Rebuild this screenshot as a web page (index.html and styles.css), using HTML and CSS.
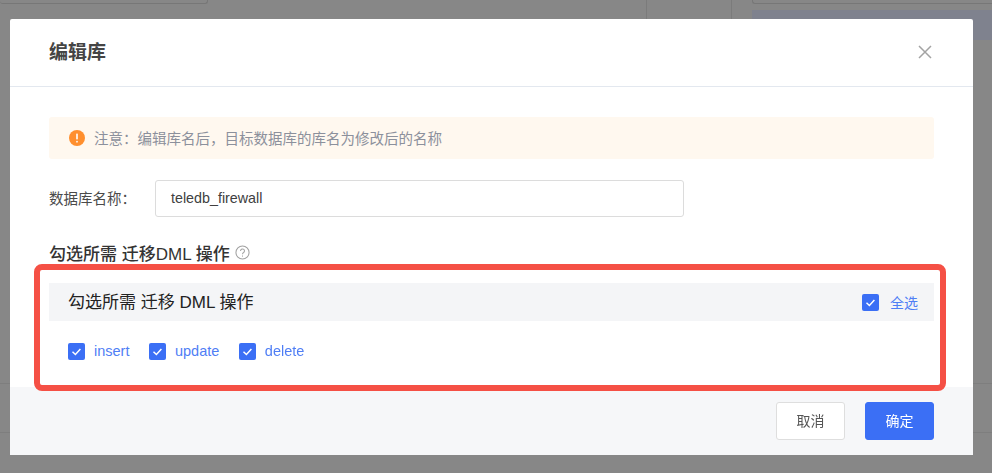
FILE: index.html
```html
<!DOCTYPE html>
<html lang="zh-CN">
<head>
<meta charset="utf-8">
<title>编辑库</title>
<link rel="stylesheet" href="styles.css">
</head>
<body>
<div class="page">
  <div class="page-top">
    <div class="page-tab"></div>
    <div class="page-col page-col-a"></div>
    <div class="page-col page-col-b"></div>
    <div class="page-side">
      <div class="page-side-box"></div>
      <div class="page-side-head"></div>
    </div>
  </div>
  <div class="page-row page-row-a"></div>
  <div class="page-row page-row-b"></div>
</div>

<div class="modal">
  <header class="modal-head">
    <h2 class="modal-title">编辑库</h2>
    <svg class="close" viewBox="0 0 14 14" width="14" height="14"><path d="M1 1l12 12M13 1L1 13"/></svg>
  </header>
  <div class="modal-body">
    <div class="alert">
      <svg class="alert-icon" viewBox="0 0 16 16" width="16" height="16"><circle cx="8" cy="8" r="8"/><rect x="7.2" y="3.4" width="1.6" height="6" rx=".6"/><rect x="7.2" y="10.8" width="1.6" height="1.7" rx=".6"/></svg>
      <span class="alert-text">注意：编辑库名后，目标数据库的库名为修改后的名称</span>
    </div>
    <div class="field">
      <label class="field-label">数据库名称：</label>
      <div class="input">teledb_firewall</div>
    </div>
    <div class="section-title">
      <span>勾选所需 迁移DML 操作</span>
      <svg class="help" viewBox="0 0 16 16" width="15" height="15"><circle cx="8" cy="8" r="7"/><path d="M5.9 6.3a2.1 2.1 0 1 1 3.3 1.7c-.8.5-1.2.9-1.2 1.8"/><path d="M8 11.2v1.2"/></svg>
    </div>
    <div class="panel-head">
      <span class="panel-title">勾选所需 迁移 DML 操作</span>
      <span class="check check-all">
        <svg class="box" viewBox="0 0 17 17" width="17" height="17"><rect width="17" height="17" rx="2"/><path d="M4.5 8.8l2.9 2.7 5-5.4"/></svg>
        <span>全选</span>
      </span>
    </div>
    <div class="options">
      <span class="check">
        <svg class="box" viewBox="0 0 17 17" width="17" height="17"><rect width="17" height="17" rx="2"/><path d="M4.5 8.8l2.9 2.7 5-5.4"/></svg>
        <span>insert</span>
      </span>
      <span class="check">
        <svg class="box" viewBox="0 0 17 17" width="17" height="17"><rect width="17" height="17" rx="2"/><path d="M4.5 8.8l2.9 2.7 5-5.4"/></svg>
        <span>update</span>
      </span>
      <span class="check">
        <svg class="box" viewBox="0 0 17 17" width="17" height="17"><rect width="17" height="17" rx="2"/><path d="M4.5 8.8l2.9 2.7 5-5.4"/></svg>
        <span>delete</span>
      </span>
    </div>
  </div>
  <footer class="modal-foot">
    <button class="btn">取消</button>
    <button class="btn btn-primary">确定</button>
  </footer>
</div>

<div class="highlight"></div>
</body>
</html>
```

FILE: styles.css
```css
* { box-sizing: border-box; }
html, body { margin: 0; height: 100%; }
body {
  position: relative;
  width: 992px;
  height: 473px;
  overflow: hidden;
  background: #878787;
  font-family: "Liberation Sans", "Noto Sans CJK SC", sans-serif;
  font-size: 14.5px;
  filter: blur(0.45px);
}

/* dimmed page behind the dialog */
.page { height: 473px; display: flex; flex-direction: column; }
.page-top { display: flex; height: 40px; }
.page-tab {
  width: 208px; height: 4px;
  border: 1px solid #777; border-top: 0; border-radius: 0 0 3px 3px;
  border-left: 0;
}
.page-col { height: 40px; border-right: 1px solid #7b7b7b; }
.page-col-a { width: 439px; }
.page-col-b { width: 85px; }
.page-side { flex: 1; padding-left: 20px; }
.page-side-box { height: 4px; border: 1px solid #777; border-top: 0; border-right: 0; border-radius: 0 0 0 3px; margin-bottom: 6px; }
.page-side-head { height: 30px; background: #7f828e; }
.page-row { height: 1px; background: #7e7e7e; }
.page-row-a { margin-top: 343px; }
.page-row-b { margin-top: 48px; }

/* dialog */
.modal {
  position: absolute;
  left: 10px; top: 19px;
  width: 963px; height: 436px;
  background: #fff;
  display: flex;
  flex-direction: column;
  border-radius: 2px;
}
.modal-head {
  height: 68px;
  flex: none;
  display: flex;
  align-items: center;
  justify-content: space-between;
  padding: 0 41px 2px 39px;
  border-bottom: 1px solid #e3e8ef;
}
.modal-title { margin: 0 0 3px; font-size: 19px; font-weight: 700; color: #444; }
.close { fill: none; stroke: #a3a3a3; stroke-width: 1.5; }

.modal-body { flex: 1; padding: 30px 39px 0; }
.alert {
  height: 42px;
  display: flex;
  align-items: center;
  gap: 9px;
  padding-left: 20px;
  background: #fff8ef;
  border-radius: 3px;
  color: #8c909c;
}
.alert-text { margin-bottom: 1px; }
.alert-icon circle { fill: #ff8f2e; }
.alert-icon rect { fill: #fff; }

.field { display: flex; align-items: center; margin-top: 21px; }
.field-label { width: 106px; margin-bottom: 3px; color: #4a4a4a; white-space: nowrap; }
.input {
  width: 529px; height: 37px;
  display: flex; align-items: center;
  padding: 0 0 2px 15px;
  border: 1px solid #dcdcdc;
  border-radius: 3px;
  color: #404040;
  font-size: 14.3px;
}

.section-title {
  display: flex; align-items: center; gap: 5px;
  margin-top: 23px;
  height: 24px;
  font-size: 17px;
  font-weight: 500;
  color: #333;
}
.help { fill: none; stroke: #a0a0a0; stroke-width: 1.1; }

.panel-head {
  height: 38px;
  margin-top: 19px;
  display: flex; align-items: center; justify-content: space-between;
  padding: 0 16px 0 19px;
  background: #f4f5f7;
}
.panel-title { margin-bottom: 4px; font-size: 17px; color: #222; }

.check { display: inline-flex; align-items: center; gap: 9px; color: #4f7ef5; font-size: 14.5px; }
.check > span { margin-top: -1px; }
.check-all { gap: 11px; font-size: 14px; }
.box rect { fill: #3b6ff5; }
.box path { fill: none; stroke: #fff; stroke-width: 1.5; }

.options { display: flex; gap: 19.5px; padding: 22px 0 0 19px; }

.modal-foot {
  height: 68px;
  flex: none;
  display: flex;
  justify-content: flex-end;
  align-items: flex-start;
  gap: 20px;
  padding: 15px 39px 0 0;
  background: #f6f7f9;
}
.btn {
  width: 69px; height: 38px;
  background: #fff;
  border: 1px solid #dedede;
  border-radius: 3px;
  color: #555;
  font: inherit;
  font-size: 14px;
  padding: 0 0 2px;
}
.btn-primary { background: #3b6ff5; border-color: #3b6ff5; color: #fff; }

/* red annotation drawn over the screenshot */
.highlight {
  position: absolute;
  left: 34px; top: 264px;
  width: 912px; height: 127px;
  border: 6px solid #f55045;
  border-radius: 8px;
}
```
